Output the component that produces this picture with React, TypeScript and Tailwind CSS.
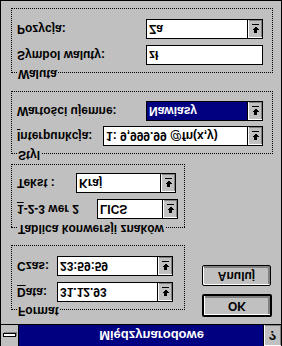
import React from "react";

function Arrow() {
  return (
    <svg width="7" height="9" viewBox="0 0 7 9" shapeRendering="crispEdges">
      <rect x="2" y="0" width="3" height="3" fill="#000" />
      <polygon points="0,3 7,3 3.5,6.5" fill="#000" />
      <rect x="0" y="8" width="7" height="1" fill="#000" />
    </svg>
  );
}

function Combo({ className, value, selected }: { className: string; value: string; selected?: boolean }) {
  return (
    <div className={`flex h-[20px] shrink-0 border border-black bg-white ${className}`}>
      <div
        className={`flex flex-1 items-center pl-[2px] whitespace-nowrap overflow-hidden ${
          selected ? "bg-[#000080] text-white" : "text-black"
        }`}
      >
        {value}
      </div>
      <div className="flex w-[15px] items-center justify-center border-l border-black bg-[#c0c0c0] shadow-[inset_1px_1px_0_#fff,inset_-1px_-1px_0_#808080]">
        <Arrow />
      </div>
    </div>
  );
}

function Edit({ className, value }: { className: string; value: string }) {
  return (
    <div className={`flex h-[20px] shrink-0 items-center border border-black bg-white pl-[2px] ${className}`}>
      {value}
    </div>
  );
}

function Group({ label, className, children }: { label: string; className: string; children: React.ReactNode }) {
  return (
    <div className={`relative border border-dotted border-black ${className}`}>
      <span className="absolute left-[5px] top-[-1px] -translate-y-1/2 bg-[#c0c0c0] px-[1px] leading-[13px]">
        {label}
      </span>
      {children}
    </div>
  );
}

function U({ children }: { children: React.ReactNode }) {
  return <span className="underline underline-offset-[2px] decoration-1">{children}</span>;
}

export default function App() {
  return (
    <div className="w-[282px] h-[346px] overflow-hidden [transform:scaleY(-1)] bg-[#c0c0c0] border-x border-b border-black flex flex-col text-black text-[12px] font-bold leading-[13px] font-['Liberation_Sans',Arial,sans-serif]">
      {/* title bar */}
      <div className="flex h-[22px] shrink-0 border-b border-black bg-[#000080]">
        <div className="flex w-[18px] items-center justify-center border-r border-black bg-[#c0c0c0]">
          <div className="h-[4px] w-[13px] border border-black bg-white shadow-[1px_1px_0_#808080]" />
        </div>
        <div className="flex flex-1 items-center justify-center pl-[21px] text-[13px] text-white">
          Międzynarodowe
        </div>
        <div className="flex w-[18px] items-center justify-center border-l border-black bg-[#c0c0c0] text-[13px] shadow-[inset_1px_1px_0_#fff,inset_-1px_-1px_0_#808080]">
          ?
        </div>
      </div>

      {/* body */}
      <div className="flex flex-col pl-[10px]">
        <div className="flex items-start">
          <Group label="Format" className="mt-[14px] h-[65px] w-[174px]">
            <div className="flex flex-col gap-[6px] pl-[5px] pt-[7px]">
              <div className="flex h-[20px] items-center">
                <span className="w-[40px] shrink-0">
                  <U>D</U>ata:
                </span>
                <Combo className="w-[116px]" value="31.12.93" />
              </div>
              <div className="flex h-[20px] items-center">
                <span className="w-[40px] shrink-0">Czas:</span>
                <Combo className="w-[116px]" value="23:59:59" />
              </div>
            </div>
          </Group>
          <div className="ml-[17px] mt-[7px] flex flex-col gap-[8px]">
            <div className="flex h-[23px] w-[70px] items-center justify-center rounded-[2px] border-2 border-black shadow-[inset_1px_1px_0_#fff,inset_-2px_-2px_0_#808080]">
              OK
            </div>
            <div className="flex h-[21px] w-[69px] items-center justify-center rounded-[2px] border border-black shadow-[inset_1px_1px_0_#fff,inset_-2px_-2px_0_#808080]">
              Anuluj
            </div>
          </div>
        </div>

        <Group label="Tablica konwersji znaków" className="mt-[17px] h-[64px] w-[174px]">
          <div className="flex flex-col gap-[6px] pl-[5px] pt-[8px]">
            <div className="flex h-[20px] items-center">
              <span className="w-[80px] shrink-0">
                <U>1</U>-2-3 wer 2
              </span>
              <Combo className="w-[81px]" value="LICS" />
            </div>
            <div className="flex h-[20px] items-center">
              <span className="w-[59px] shrink-0">Tekst :</span>
              <Combo className="w-[100px]" value="Kraj" />
            </div>
          </div>
        </Group>

        <Group label="Styl" className="mt-[10px] h-[63px] w-[262px]">
          <div className="flex flex-col gap-[5px] pl-[5px] pt-[7px]">
            <div className="flex h-[20px] items-center">
              <span className="w-[86px] shrink-0">
                <U>I</U>nterpunkcja:
              </span>
              <Combo className="w-[160px]" value="1: 9,999.99 @fn(x,y)" />
            </div>
            <div className="flex h-[20px] items-center">
              <span className="w-[129px] shrink-0">Wartości ujemne:</span>
              <Combo className="w-[117px]" value="Nawiasy" selected />
            </div>
          </div>
        </Group>

        <Group label="Waluta" className="mt-[18px] h-[65px] w-[262px]">
          <div className="flex flex-col gap-[6px] pl-[5px] pt-[7px]">
            <div className="flex h-[20px] items-center">
              <span className="w-[129px] shrink-0">Symbol waluty:</span>
              <Edit className="w-[117px]" value="zł" />
            </div>
            <div className="flex h-[20px] items-center">
              <span className="w-[129px] shrink-0">Pozycja:</span>
              <Combo className="w-[117px]" value="Za" />
            </div>
          </div>
        </Group>
      </div>
    </div>
  );
}
